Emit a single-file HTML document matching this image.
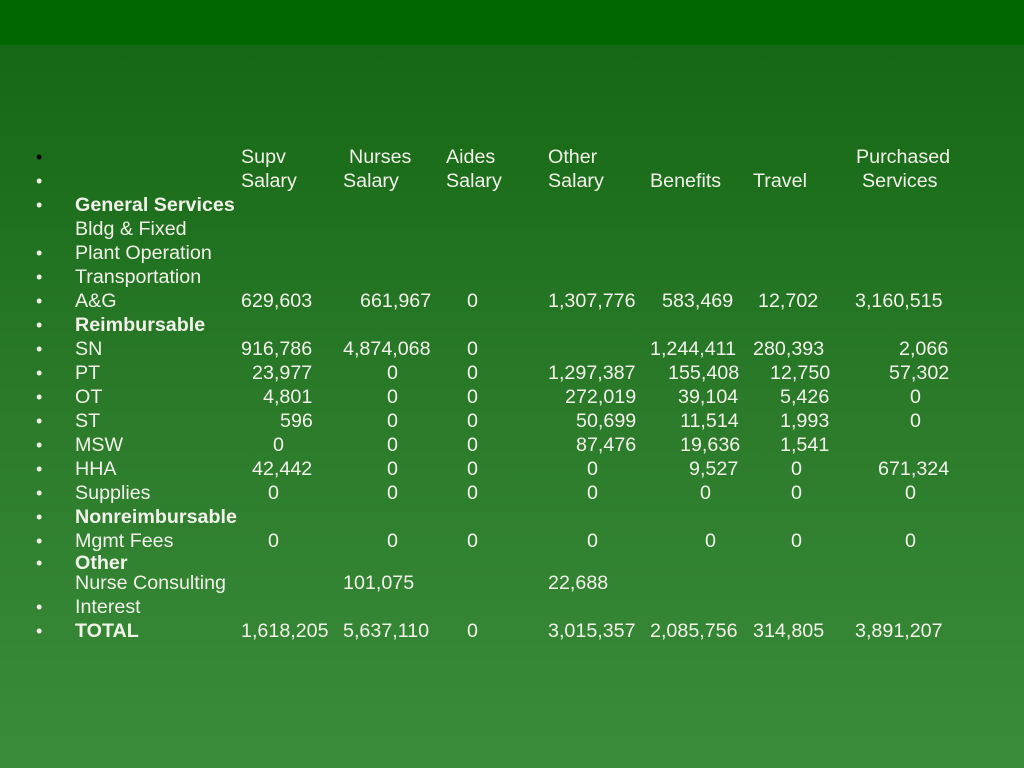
<!DOCTYPE html>
<html><head><meta charset="utf-8"><style>
html,body{margin:0;padding:0}
body{width:1024px;height:768px;position:relative;overflow:hidden;
background:linear-gradient(#136a14 45px,#156814 46px,#2a7a2a 400px,#3a8c3a 768px);
font-family:"Liberation Sans",sans-serif;font-size:19.7px;color:#f2f2ea}
#top{position:absolute;left:0;top:0;width:1024px;height:45px;background:#006600}
div.t{position:absolute;line-height:24px;white-space:nowrap}
div.b{font-size:18px}
b{font-weight:bold}
</style></head><body>
<div id="top"></div>
<div class="t b" style="left:36px;top:145px;color:#000">•</div>
<div class="t b" style="left:36px;top:169px">•</div>
<div class="t b" style="left:36px;top:193px">•</div>
<div class="t b" style="left:36px;top:241px">•</div>
<div class="t b" style="left:36px;top:265px">•</div>
<div class="t b" style="left:36px;top:289px">•</div>
<div class="t b" style="left:36px;top:313px">•</div>
<div class="t b" style="left:36px;top:337px">•</div>
<div class="t b" style="left:36px;top:361px">•</div>
<div class="t b" style="left:36px;top:385px">•</div>
<div class="t b" style="left:36px;top:409px">•</div>
<div class="t b" style="left:36px;top:433px">•</div>
<div class="t b" style="left:36px;top:457px">•</div>
<div class="t b" style="left:36px;top:481px">•</div>
<div class="t b" style="left:36px;top:505px">•</div>
<div class="t b" style="left:36px;top:529px">•</div>
<div class="t b" style="left:36px;top:551px">•</div>
<div class="t b" style="left:36px;top:595px">•</div>
<div class="t b" style="left:36px;top:619px">•</div>
<div class="t" style="left:75px;top:193px"><b>General Services</b></div>
<div class="t" style="left:75px;top:217px">Bldg &amp; Fixed</div>
<div class="t" style="left:75px;top:241px">Plant Operation</div>
<div class="t" style="left:75px;top:265px">Transportation</div>
<div class="t" style="left:75px;top:289px">A&amp;G</div>
<div class="t" style="left:75px;top:313px"><b>Reimbursable</b></div>
<div class="t" style="left:75px;top:337px">SN</div>
<div class="t" style="left:75px;top:361px">PT</div>
<div class="t" style="left:75px;top:385px">OT</div>
<div class="t" style="left:75px;top:409px">ST</div>
<div class="t" style="left:75px;top:433px">MSW</div>
<div class="t" style="left:75px;top:457px">HHA</div>
<div class="t" style="left:75px;top:481px">Supplies</div>
<div class="t" style="left:75px;top:505px"><b>Nonreimbursable</b></div>
<div class="t" style="left:75px;top:529px">Mgmt Fees</div>
<div class="t" style="left:75px;top:551px"><b>Other</b></div>
<div class="t" style="left:75px;top:571px">Nurse Consulting</div>
<div class="t" style="left:75px;top:595px">Interest</div>
<div class="t" style="left:75px;top:619px"><b>TOTAL</b></div>
<div class="t" style="left:241px;top:145px">Supv</div>
<div class="t" style="left:349px;top:145px">Nurses</div>
<div class="t" style="left:446px;top:145px">Aides</div>
<div class="t" style="left:548px;top:145px">Other</div>
<div class="t" style="left:856px;top:145px">Purchased</div>
<div class="t" style="left:241px;top:169px">Salary</div>
<div class="t" style="left:343px;top:169px">Salary</div>
<div class="t" style="left:446px;top:169px">Salary</div>
<div class="t" style="left:548px;top:169px">Salary</div>
<div class="t" style="left:650px;top:169px">Benefits</div>
<div class="t" style="left:753px;top:169px">Travel</div>
<div class="t" style="left:862px;top:169px">Services</div>
<div class="t" style="left:241px;top:289px">629,603</div>
<div class="t" style="left:360px;top:289px">661,967</div>
<div class="t" style="left:467px;top:289px">0</div>
<div class="t" style="left:548px;top:289px">1,307,776</div>
<div class="t" style="left:662px;top:289px">583,469</div>
<div class="t" style="left:758px;top:289px">12,702</div>
<div class="t" style="left:855px;top:289px">3,160,515</div>
<div class="t" style="left:241px;top:337px">916,786</div>
<div class="t" style="left:343px;top:337px">4,874,068</div>
<div class="t" style="left:467px;top:337px">0</div>
<div class="t" style="left:650px;top:337px">1,244,411</div>
<div class="t" style="left:753px;top:337px">280,393</div>
<div class="t" style="left:899px;top:337px">2,066</div>
<div class="t" style="left:252px;top:361px">23,977</div>
<div class="t" style="left:387px;top:361px">0</div>
<div class="t" style="left:467px;top:361px">0</div>
<div class="t" style="left:548px;top:361px">1,297,387</div>
<div class="t" style="left:668px;top:361px">155,408</div>
<div class="t" style="left:770px;top:361px">12,750</div>
<div class="t" style="left:889px;top:361px">57,302</div>
<div class="t" style="left:263px;top:385px">4,801</div>
<div class="t" style="left:387px;top:385px">0</div>
<div class="t" style="left:467px;top:385px">0</div>
<div class="t" style="left:565px;top:385px">272,019</div>
<div class="t" style="left:678px;top:385px">39,104</div>
<div class="t" style="left:780px;top:385px">5,426</div>
<div class="t" style="left:910px;top:385px">0</div>
<div class="t" style="left:280px;top:409px">596</div>
<div class="t" style="left:387px;top:409px">0</div>
<div class="t" style="left:467px;top:409px">0</div>
<div class="t" style="left:576px;top:409px">50,699</div>
<div class="t" style="left:680px;top:409px">11,514</div>
<div class="t" style="left:780px;top:409px">1,993</div>
<div class="t" style="left:910px;top:409px">0</div>
<div class="t" style="left:273px;top:433px">0</div>
<div class="t" style="left:387px;top:433px">0</div>
<div class="t" style="left:467px;top:433px">0</div>
<div class="t" style="left:576px;top:433px">87,476</div>
<div class="t" style="left:680px;top:433px">19,636</div>
<div class="t" style="left:780px;top:433px">1,541</div>
<div class="t" style="left:252px;top:457px">42,442</div>
<div class="t" style="left:387px;top:457px">0</div>
<div class="t" style="left:467px;top:457px">0</div>
<div class="t" style="left:587px;top:457px">0</div>
<div class="t" style="left:689px;top:457px">9,527</div>
<div class="t" style="left:791px;top:457px">0</div>
<div class="t" style="left:878px;top:457px">671,324</div>
<div class="t" style="left:268px;top:481px">0</div>
<div class="t" style="left:387px;top:481px">0</div>
<div class="t" style="left:467px;top:481px">0</div>
<div class="t" style="left:587px;top:481px">0</div>
<div class="t" style="left:700px;top:481px">0</div>
<div class="t" style="left:791px;top:481px">0</div>
<div class="t" style="left:905px;top:481px">0</div>
<div class="t" style="left:268px;top:529px">0</div>
<div class="t" style="left:387px;top:529px">0</div>
<div class="t" style="left:467px;top:529px">0</div>
<div class="t" style="left:587px;top:529px">0</div>
<div class="t" style="left:705px;top:529px">0</div>
<div class="t" style="left:791px;top:529px">0</div>
<div class="t" style="left:905px;top:529px">0</div>
<div class="t" style="left:343px;top:571px">101,075</div>
<div class="t" style="left:548px;top:571px">22,688</div>
<div class="t" style="left:241px;top:619px">1,618,205</div>
<div class="t" style="left:343px;top:619px">5,637,110</div>
<div class="t" style="left:467px;top:619px">0</div>
<div class="t" style="left:548px;top:619px">3,015,357</div>
<div class="t" style="left:650px;top:619px">2,085,756</div>
<div class="t" style="left:753px;top:619px">314,805</div>
<div class="t" style="left:855px;top:619px">3,891,207</div>
</body></html>
